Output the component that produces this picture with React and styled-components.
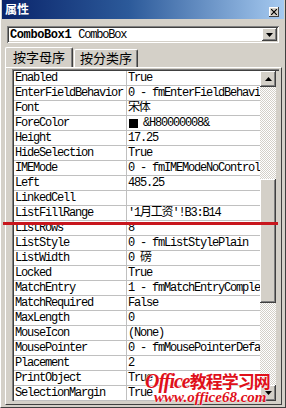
import React from 'react'
import styled, { createGlobalStyle } from 'styled-components'

const GlobalStyle = createGlobalStyle`
  html, body {
    margin: 0;
    padding: 0;
    background: #d4d0c8;
  }
`

const mono = `"Liberation Mono", "Noto Sans CJK SC", monospace`
const cjk = `"Noto Sans CJK SC", "Liberation Sans", sans-serif`

const Window = styled.div`
  position: relative;
  width: 286px;
  height: 408px;
  box-sizing: border-box;
  background: #d4d0c8;
  border-left: 1px solid #ffffff;
  border-right: 1px solid #404040;
  border-bottom: 1px solid #404040;
  display: flex;
  flex-direction: column;
  overflow: hidden;
`

const TitleBar = styled.div`
  height: 19px;
  margin: 0 1px 0 1px;
  background: linear-gradient(to right, #0a246a 0%, #2c5a9a 45%, #a6caf0 100%);
  display: flex;
  align-items: center;
  justify-content: space-between;
  padding: 0 5px 0 3px;
`

const Title = styled.span`
  font-family: ${cjk};
  font-weight: bold;
  font-size: 12px;
  color: #ffffff;
  line-height: 1;
  margin-top: -2px;
`

const CloseButton = styled.div`
  width: 10px;
  height: 10px;
  margin-top: 4px;
  background: #d4d0c8;
  box-shadow: inset -1px -1px #404040, inset 1px 1px #ffffff;
  display: flex;
  align-items: center;
  justify-content: center;
`

const ComboRow = styled.div`
  padding: 7px 6px 0 6px;
`

const Combo = styled.div`
  height: 17px;
  box-sizing: border-box;
  background: #ffffff;
  box-shadow: inset 1px 1px #808080, inset -1px -1px #ffffff, inset 2px 2px #404040, inset -2px -2px #d4d0c8;
  display: flex;
  align-items: center;
  padding: 0 2px 0 3px;
  font-family: ${mono};
  font-size: 12px;
  letter-spacing: -1.2px;
  color: #000;
`

const ComboName = styled.span`
  font-weight: bold;
  letter-spacing: -0.4px;
  margin-right: 7px;
`

const ComboType = styled.span`
  flex: 1;
`

const DropButton = styled.div`
  width: 15px;
  height: 13px;
  background: #d4d0c8;
  box-shadow: inset -1px -1px #404040, inset 1px 1px #ffffff, inset -2px -2px #808080;
  display: flex;
  align-items: center;
  justify-content: center;
`

const Tabs = styled.div`
  display: flex;
  align-items: flex-end;
  padding: 4px 0 0 4px;
  height: 20px;
`

const Tab = styled.div`
  height: ${p => (p.active ? 20 : 18)}px;
  box-sizing: border-box;
  padding: 0 ${p => (p.active ? 7 : 5)}px;
  margin-right: 1px;
  border-top: 1px solid #ffffff;
  border-left: 1px solid #ffffff;
  border-right: 1px solid #404040;
  box-shadow: inset -1px 0 #808080;
  border-radius: 2px 2px 0 0;
  font-family: ${cjk};
  font-size: 13px;
  line-height: ${p => (p.active ? 18 : 16)}px;
  color: #000;
  position: relative;
  z-index: ${p => (p.active ? 2 : 1)};
`

const Panel = styled.div`
  flex: 1;
  margin: 0 3px 2px 4px;
  border-top: 1px solid #ffffff;
  border-left: 1px solid #ffffff;
  border-right: 1px solid #404040;
  border-bottom: 1px solid #404040;
  padding: 1px 2px 1px 6px;
  display: flex;
  flex-direction: column;
`

const GridFrame = styled.div`
  display: flex;
  border-top: 1px solid #808080;
  border-left: 1px solid #808080;
  box-shadow: inset 1px 1px #404040;
  padding: 1px 0 0 1px;
  background: #d4d0c8;
`

const Rows = styled.div`
  width: 246px;
  background: #ffffff;
`

const Row = styled.div`
  display: flex;
  height: 15px;
  box-sizing: border-box;
  border-bottom: 1px solid #c0c0c0;
  font-family: ${mono};
  font-size: 12px;
  letter-spacing: -1.2px;
  line-height: 14px;
  color: #000;
  white-space: nowrap;
`

const NameCell = styled.div`
  width: 113px;
  flex: none;
  box-sizing: border-box;
  padding-left: 1px;
  border-right: 1px solid #c0c0c0;
  overflow: hidden;
`

const ValueCell = styled.div`
  flex: 1;
  padding-left: 1px;
  overflow: hidden;
  display: flex;
  align-items: center;
`

const Swatch = styled.span`
  display: inline-block;
  width: 9px;
  height: 9px;
  background: #000;
  margin: 0 5px 0 1px;
  flex: none;
`

const ScrollBar = styled.div`
  width: 16px;
  flex: none;
  display: flex;
  flex-direction: column;
  background-color: #ffffff;
  background-image: repeating-conic-gradient(#d4d0c8 0 25%, #ffffff 0 50%);
  background-size: 2px 2px;
`

const ScrollButton = styled.div`
  height: 16px;
  flex: none;
  box-sizing: border-box;
  background: #d4d0c8;
  box-shadow: inset -1px -1px #404040, inset 1px 1px #ffffff, inset -2px -2px #808080;
  display: flex;
  align-items: center;
  justify-content: center;
`

const Thumb = styled.div`
  height: 124px;
  margin-top: ${p => p.offset}px;
  background: #d4d0c8;
  box-shadow: inset -1px -1px #404040, inset 1px 1px #ffffff, inset -2px -2px #808080;
`

const Track = styled.div`
  flex: 1;
`

const RedLine = styled.div`
  position: absolute;
  left: 2px;
  top: 222px;
  width: 275px;
  height: 3px;
  background: #c8161d;
`

const Watermark = styled.div`
  position: absolute;
  left: 144px;
  top: 371px;
  width: 135px;
  color: #e0101a;
  text-shadow: 0 0 2px #ffffff, 0 0 1px #ffffff;
`

const WaterTop = styled.div`
  font-family: ${cjk};
  font-weight: bold;
  font-size: 17px;
  line-height: 19px;
  height: 19px;
  letter-spacing: -1px;
  white-space: nowrap;
`

const WaterLatin = styled.span`
  font-family: "Liberation Serif", serif;
  font-style: italic;
  font-size: 20px;
  letter-spacing: -1px;
`

const WaterBottom = styled.div`
  font-family: "Liberation Serif", serif;
  font-style: italic;
  font-weight: bold;
  font-size: 15px;
  line-height: 15px;
  margin: 0 0 0 9px;
  white-space: nowrap;
`

const Arrow = ({ dir = 'down' }) => (
  <svg width="7" height="4" viewBox="0 0 7 4">
    {dir === 'up'
      ? <polygon points="3.5,0 7,4 0,4" fill="#000" />
      : <polygon points="0,0 7,0 3.5,4" fill="#000" />}
  </svg>
)

const props = [
  ['Enabled', 'True'],
  ['EnterFieldBehavior', '0 - fmEnterFieldBehavi'],
  ['Font', '宋体'],
  ['ForeColor', '&H80000008&', true],
  ['Height', '17.25'],
  ['HideSelection', 'True'],
  ['IMEMode', '0 - fmIMEModeNoControl'],
  ['Left', '485.25'],
  ['LinkedCell', ''],
  ['ListFillRange', "'1月工资'!B3:B14"],
  ['ListRows', '8'],
  ['ListStyle', '0 - fmListStylePlain'],
  ['ListWidth', '0 磅'],
  ['Locked', 'True'],
  ['MatchEntry', '1 - fmMatchEntryComple'],
  ['MatchRequired', 'False'],
  ['MaxLength', '0'],
  ['MouseIcon', '(None)'],
  ['MousePointer', '0 - fmMousePointerDefa'],
  ['Placement', '2'],
  ['PrintObject', 'True'],
  ['SelectionMargin', 'True'],
]

const App = () => {
  return (
    <Window>
      <GlobalStyle />
      <TitleBar>
        <Title>属性</Title>
        <CloseButton>
          <svg width="6" height="6" viewBox="0 0 6 6">
            <path d="M0 0 L6 6 M6 0 L0 6" stroke="#000" strokeWidth="1.2" />
          </svg>
        </CloseButton>
      </TitleBar>

      <ComboRow>
        <Combo>
          <ComboName>ComboBox1</ComboName>
          <ComboType>ComboBox</ComboType>
          <DropButton><Arrow /></DropButton>
        </Combo>
      </ComboRow>

      <Tabs>
        <Tab active>按字母序</Tab>
        <Tab>按分类序</Tab>
      </Tabs>

      <Panel>
        <GridFrame>
          <Rows>
            { props.map(([name, value, swatch]) => (
              <Row key={ name }>
                <NameCell>{ name }</NameCell>
                <ValueCell>
                  { swatch && <Swatch /> }
                  { value }
                </ValueCell>
              </Row>
            )) }
          </Rows>
          <ScrollBar>
            <ScrollButton><Arrow dir="up" /></ScrollButton>
            <Thumb offset={ 92 } />
            <Track />
            <ScrollButton><Arrow /></ScrollButton>
          </ScrollBar>
        </GridFrame>
      </Panel>

      <RedLine />
      <Watermark>
        <WaterTop><WaterLatin>Office</WaterLatin>教程学习网</WaterTop>
        <WaterBottom>www.office68.com</WaterBottom>
      </Watermark>
    </Window>
  )
}

export default App
